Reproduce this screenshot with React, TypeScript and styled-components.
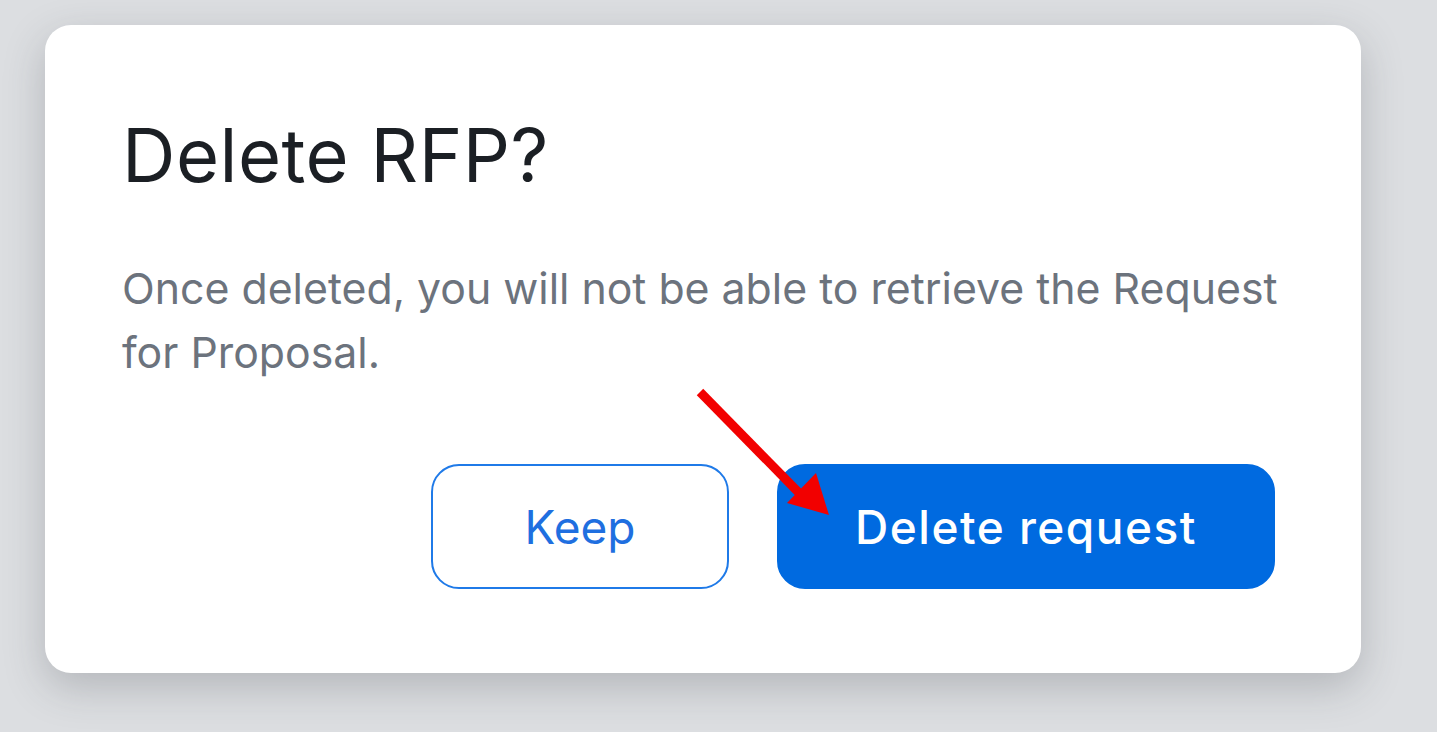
import styled, { createGlobalStyle } from "styled-components";

const GlobalStyle = createGlobalStyle`
    html, body {
        margin: 0;
        padding: 0;
        background: #dcdee1;
        font-family: Inter, "Noto Sans", Arial, sans-serif;
    }
`

const Page = styled.div`
    width: 1437px;
    height: 732px;
    padding: 25px 0 0 45px;
    box-sizing: border-box;
    overflow: hidden;
`

const Card = styled.div`
    position: relative;
    width: 1316px;
    height: 648px;
    box-sizing: border-box;
    padding: 80px 86px 84px 77px;
    background: #ffffff;
    border-radius: 26px;
    box-shadow: 0 14px 40px rgba(60, 64, 70, 0.25);
    display: flex;
    flex-direction: column;
`

const Title = styled.h2`
    margin: 0;
    font-size: 74px;
    line-height: 100px;
    font-weight: 400;
    color: #1b1f24;
    letter-spacing: 0.5px;
`

const Body = styled.p`
    margin: 52px -6px 0 0;
    font-size: 42.8px;
    line-height: 64px;
    color: #6c737d;
`

const Actions = styled.div`
    margin-top: auto;
    display: flex;
    justify-content: flex-end;
    gap: 48px;
`

const Button = styled.button<{ $primary?: boolean }>`
    height: 125px;
    width: ${p => (p.$primary ? "498px" : "298px")};
    box-sizing: border-box;
    border-radius: 28px;
    border: 2px solid ${p => (p.$primary ? "#006ae0" : "#1f7ae8")};
    background: ${p => (p.$primary ? "#006ae0" : "#ffffff")};
    color: ${p => (p.$primary ? "#ffffff" : "#1f6fe0")};
    font-family: inherit;
    font-size: 46px;
    font-weight: ${p => (p.$primary ? 500 : 400)};
    letter-spacing: ${p => (p.$primary ? "1.5px" : "0")};
    cursor: pointer;
`

const Arrow = styled.svg`
    position: absolute;
    left: 650px;
    top: 362px;
    width: 140px;
    height: 140px;
    pointer-events: none;
`

export default function App() {
    return (
        <>
            <GlobalStyle/>
            <Page>
                <Card>
                    <Title>Delete RFP?</Title>
                    <Body>Once deleted, you will not be able to retrieve the Request for Proposal.</Body>
                    <Actions>
                        <Button>Keep</Button>
                        <Button $primary>Delete request</Button>
                    </Actions>
                    <Arrow viewBox="0 0 140 140">
                        <line x1="5" y1="5" x2="110" y2="112" stroke="#f20000" strokeWidth="9"/>
                        <polygon points="134,128 92,116 121,86" fill="#f20000"/>
                    </Arrow>
                </Card>
            </Page>
        </>
    )
}
